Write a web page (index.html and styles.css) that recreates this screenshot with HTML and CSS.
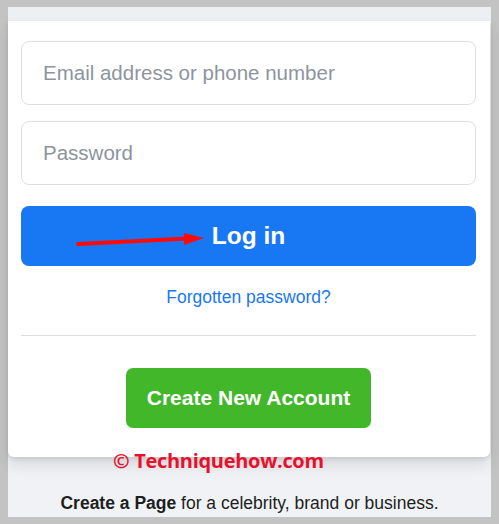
FILE: index.html
```html
<!DOCTYPE html>
<html>
<head>
<meta charset="utf-8">
<link rel="stylesheet" href="styles.css">
</head>
<body>
<div class="frame">
  <div class="page">
    <div class="card">
      <form class="form">
        <input class="field" type="text" placeholder="Email address or phone number">
        <input class="field" type="password" placeholder="Password">
        <button class="login" type="button">
          <svg class="arrow" width="140" height="20" viewBox="0 0 140 20">
            <line x1="2" y1="16" x2="112" y2="10.5" stroke="#ff0a0a" stroke-width="4" stroke-linecap="round"/>
            <polygon points="108,5 108,17 128,10" fill="#ff0a0a"/>
          </svg>
          Log in
        </button>
        <a class="forgot" href="#">Forgotten password?</a>
        <div class="divider"></div>
        <div class="create-row">
          <button class="create" type="button">Create New Account</button>
        </div>
      </form>
      <div class="watermark">© Techniquehow.com</div>
    </div>
    <p class="page-note"><b>Create a Page</b> for a celebrity, brand or business.</p>
  </div>
</div>
</body>
</html>
```

FILE: styles.css
```css
html, body {
  margin: 0;
  padding: 0;
}
body {
  background: #c3c3c3;
  font-family: "Liberation Sans", Arial, sans-serif;
}
.frame {
  padding: 7px 8px;
}
.page {
  background: linear-gradient(#eeeff3, #f0f2f5);
  height: 510px;
  box-sizing: border-box;
  padding-top: 14px;
}
.card {
  position: relative;
  background: #fff;
  margin-right: 1px;
  border-radius: 0 0 6px 6px;
  box-shadow: 0 2px 4px rgba(0,0,0,.1), 0 8px 16px rgba(0,0,0,.1);
  padding: 20px 14px 29px 13px;
}
.form {
  display: flex;
  flex-direction: column;
  margin: 0;
}
.field {
  height: 64px;
  box-sizing: border-box;
  border: 1px solid #dddfe2;
  border-radius: 8px;
  padding: 0 21px;
  font-family: "Liberation Sans", Arial, sans-serif;
  font-size: 20.5px;
  color: #1c1e21;
  outline: none;
  margin: 0 0 16px 0;
}
.field::placeholder {
  color: #8d949e;
}
.field + .field {
  margin-bottom: 21px;
}
.login {
  position: relative;
  height: 60px;
  border: none;
  border-radius: 8px;
  background: #1877f2;
  color: #fff;
  font-family: "Liberation Sans", Arial, sans-serif;
  font-weight: bold;
  font-size: 24.5px;
  padding: 0;
}
.arrow {
  position: absolute;
  left: 55px;
  top: 22px;
}
.forgot {
  margin-top: 21px;
  text-align: center;
  color: #1877f2;
  font-size: 17.5px;
  line-height: 20px;
  text-decoration: none;
}
.divider {
  height: 1px;
  background: #dadde1;
  margin-top: 28px;
}
.create-row {
  display: flex;
  justify-content: center;
  margin-top: 32px;
}
.create {
  width: 245px;
  height: 60px;
  border: none;
  border-radius: 7px;
  background: #42b72a;
  color: #fff;
  font-family: "Liberation Sans", Arial, sans-serif;
  font-weight: bold;
  font-size: 21px;
  padding: 0;
}
.watermark {
  position: absolute;
  left: 105px;
  bottom: -17px;
  font-family: "Open Sans", sans-serif;
  font-weight: bold;
  font-size: 20px;
  color: #e8112d;
  white-space: nowrap;
  letter-spacing: -0.3px;
}
.page-note {
  margin: 36px 0 0 0;
  text-align: center;
  font-size: 17.5px;
  color: #1c1e21;
}
```
